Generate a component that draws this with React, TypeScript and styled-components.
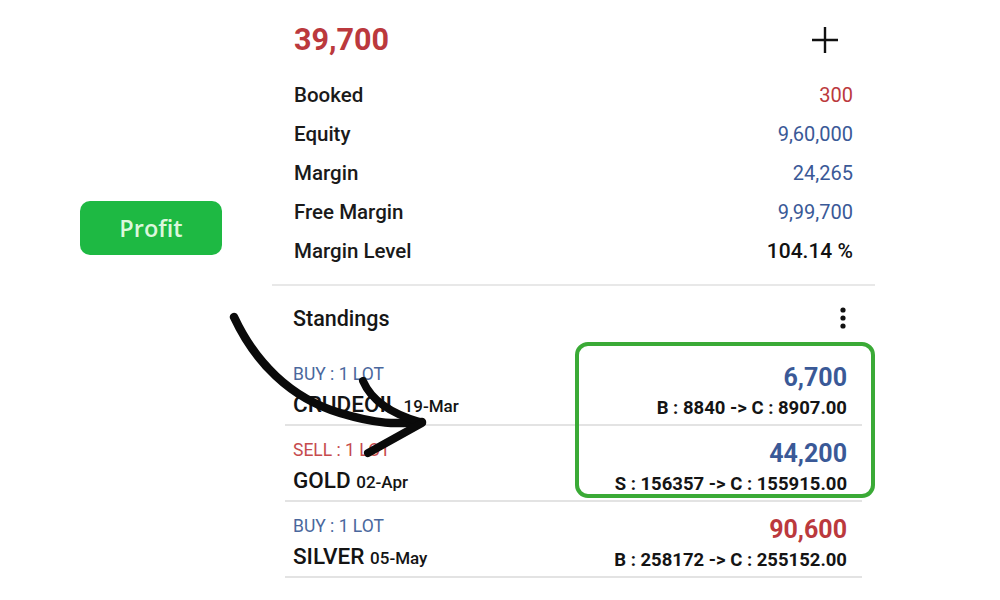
import React from "react";
import styled, { createGlobalStyle } from "styled-components";

const GlobalStyle = createGlobalStyle`
  html, body { margin: 0; padding: 0; background: #ffffff; }
  body { font-family: Roboto, "Liberation Sans", sans-serif; color: #111; }
`;

const RED = "#bb393d";
const BLUE = "#3a5997";

const Page = styled.div`
  position: relative;
  width: 1000px;
  height: 600px;
  overflow: hidden;
  background: #fff;
`;

const Panel = styled.div`
  margin-left: 272px;
  width: 603px;
  display: flex;
  flex-direction: column;
`;

const Header = styled.div`
  box-sizing: border-box;
  height: 75px;
  padding: 5px 36px 0 22px;
  display: flex;
  align-items: center;
  justify-content: space-between;
`;

const Balance = styled.div`
  font-size: 30.5px;
  font-weight: 700;
  color: ${RED};
  line-height: 36px;
`;

const IconButton = styled.div`
  width: 28px;
  height: 28px;
  display: flex;
  align-items: center;
  justify-content: center;
`;

const InfoList = styled.div`
  padding: 0 22px;
  display: flex;
  flex-direction: column;
`;

const InfoRow = styled.div`
  height: 39px;
  display: flex;
  align-items: center;
  justify-content: space-between;
`;

const InfoLabel = styled.span`
  font-size: 20.5px;
  font-weight: 500;
  color: #1a1a1a;
`;

const InfoValue = styled.span<{ $tone: "red" | "blue" | "dark" }>`
  font-size: ${(p) => (p.$tone === "dark" ? "21px" : "20px")};
  font-weight: ${(p) => (p.$tone === "dark" ? 500 : 400)};
  color: ${(p) => (p.$tone === "red" ? RED : p.$tone === "blue" ? BLUE : "#111")};
`;

const Divider = styled.div`
  margin-top: 14px;
  height: 2px;
  background: #e8e8e8;
`;

const SectionHeader = styled.div`
  height: 64px;
  padding: 0 29px 0 21px;
  display: flex;
  align-items: center;
  justify-content: space-between;
`;

const SectionTitle = styled.span`
  font-size: 21.5px;
  font-weight: 500;
  color: #161616;
`;

const List = styled.div`
  margin: 0 13px;
  display: flex;
  flex-direction: column;
`;

const PositionRow = styled.div`
  box-sizing: border-box;
  height: 76px;
  padding: 12px 15px 2px 8px;
  border-bottom: 2px solid #e3e3e3;
  display: flex;
  justify-content: space-between;
`;

const Col = styled.div<{ $align: "left" | "right" }>`
  display: flex;
  flex-direction: column;
  align-items: ${(p) => (p.$align === "left" ? "flex-start" : "flex-end")};
`;

const Side = styled.div<{ $side: "BUY" | "SELL" }>`
  height: 24px;
  line-height: 24px;
  font-size: 17.5px;
  color: ${(p) => (p.$side === "BUY" ? "#4a679d" : "#c64b4d")};
`;

const Symbol = styled.div`
  height: 36px;
  line-height: 36px;
  font-size: 22.5px;
  font-weight: 500;
  color: #141414;
`;

const Expiry = styled.span`
  font-size: 17px;
  font-weight: 500;
`;

const Pnl = styled.div<{ $tone: "red" | "blue" }>`
  height: 32px;
  line-height: 32px;
  font-size: 25px;
  font-weight: 700;
  color: ${(p) => (p.$tone === "red" ? RED : BLUE)};
`;

const Prices = styled.div`
  height: 28px;
  line-height: 28px;
  font-size: 18.5px;
  font-weight: 700;
  color: #141414;
`;

const Highlight = styled.div`
  position: absolute;
  left: 575px;
  top: 342px;
  width: 300px;
  height: 156px;
  box-sizing: border-box;
  border: 4px solid #3aaa36;
  border-radius: 13px;
  pointer-events: none;
`;

const ProfitTag = styled.div`
  position: absolute;
  left: 80px;
  top: 201px;
  width: 142px;
  height: 54px;
  border-radius: 10px;
  background: #1eb943;
  color: #dcf7dc;
  font-family: "Open Sans", "Liberation Sans", sans-serif;
  font-weight: 600;
  font-size: 23.5px;
  display: flex;
  align-items: center;
  justify-content: center;
`;

const ArrowLayer = styled.svg`
  position: absolute;
  left: 0;
  top: 0;
  width: 1000px;
  height: 600px;
  pointer-events: none;
`;

const info = [
  { label: "Booked", value: "300", tone: "red" as const },
  { label: "Equity", value: "9,60,000", tone: "blue" as const },
  { label: "Margin", value: "24,265", tone: "blue" as const },
  { label: "Free Margin", value: "9,99,700", tone: "blue" as const },
  { label: "Margin Level", value: "104.14 %", tone: "dark" as const },
];

const positions = [
  { side: "BUY" as const, symbol: "CRUDEOIL", expiry: "19-Mar", pnl: "6,700", tone: "blue" as const, prices: "B : 8840 -> C : 8907.00" },
  { side: "SELL" as const, symbol: "GOLD", expiry: "02-Apr", pnl: "44,200", tone: "blue" as const, prices: "S : 156357 -> C : 155915.00" },
  { side: "BUY" as const, symbol: "SILVER", expiry: "05-May", pnl: "90,600", tone: "red" as const, prices: "B : 258172 -> C : 255152.00" },
];

export default function App() {
  return (
    <>
      <GlobalStyle />
      <Page>
        <Panel>
          <Header>
            <Balance>39,700</Balance>
            <IconButton>
              <svg width="28" height="28" viewBox="0 0 28 28">
                <path d="M14 1 V27 M1 14 H27" stroke="#111" strokeWidth="2.4" />
              </svg>
            </IconButton>
          </Header>
          <InfoList>
            {info.map((r) => (
              <InfoRow key={r.label}>
                <InfoLabel>{r.label}</InfoLabel>
                <InfoValue $tone={r.tone}>{r.value}</InfoValue>
              </InfoRow>
            ))}
          </InfoList>
          <Divider />
          <SectionHeader>
            <SectionTitle>Standings</SectionTitle>
            <svg width="6" height="24" viewBox="0 0 6 24">
              <circle cx="3" cy="4" r="2.6" fill="#111" />
              <circle cx="3" cy="12" r="2.6" fill="#111" />
              <circle cx="3" cy="20" r="2.6" fill="#111" />
            </svg>
          </SectionHeader>
          <List>
            {positions.map((p) => (
              <PositionRow key={p.symbol}>
                <Col $align="left">
                  <Side $side={p.side}>{p.side} : 1 LOT</Side>
                  <Symbol>
                    {p.symbol} <Expiry>{p.expiry}</Expiry>
                  </Symbol>
                </Col>
                <Col $align="right">
                  <Pnl $tone={p.tone}>{p.pnl}</Pnl>
                  <Prices>{p.prices}</Prices>
                </Col>
              </PositionRow>
            ))}
          </List>
        </Panel>
        <Highlight />
        <ProfitTag>Profit</ProfitTag>
        <ArrowLayer viewBox="0 0 1000 600">
          <g fill="none" stroke="#0a0a0a" strokeLinecap="round" strokeLinejoin="round">
            <path d="M234 317 C 255 362, 290 398, 340 413 S 405 422, 422 422" strokeWidth="8.5" />
            <path d="M363 381 C 372 402, 392 414, 420 422" strokeWidth="8" />
            <path d="M422 423 L 368 453" strokeWidth="8" />
          </g>
        </ArrowLayer>
      </Page>
    </>
  );
}
